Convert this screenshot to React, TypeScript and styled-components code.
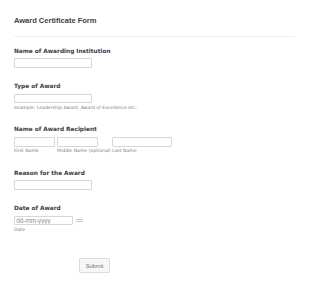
import React from 'react';
import styled, { createGlobalStyle } from 'styled-components';

const GlobalStyle = createGlobalStyle`
	html, body {
		margin: 0;
		padding: 0;
		background: #ffffff;
	}
	* {
		box-sizing: border-box;
	}
`;

const Page = styled.div`
	width: 310px;
	height: 285px;
	padding: 15.7px 0 0 14px;
	display: flex;
	flex-direction: column;
`;

const Header = styled.div`
	width: 281px;
	padding-bottom: 10px;
	border-bottom: 1px solid #f0f0f0;
	margin-bottom: 10px;
`;

const Title = styled.h1`
	margin: 0;
	font-family: 'Liberation Sans', Arial, sans-serif;
	font-size: 7.5px;
	line-height: 10px;
	font-weight: 700;
	color: #3f3f3f;
`;

const Fields = styled.div`
	display: flex;
	flex-direction: column;
	gap: 14.6px;
`;

const Field = styled.div`
	display: flex;
	flex-direction: column;
	align-items: flex-start;
`;

const Label = styled.label`
	font-family: 'DejaVu Sans', Verdana, sans-serif;
	font-size: 5.8px;
	line-height: 8px;
	font-weight: 700;
	color: #363c48;
	margin-bottom: 3.3px;
`;

const TextBox = styled.input<{ $w: number }>`
	width: ${(p) => p.$w}px;
	height: 9.8px;
	margin: 0;
	padding: 0 1.3px;
	border: 1px solid #d6d6d6;
	border-radius: 1px;
	background: #fff;
	font-family: 'Liberation Sans', Arial, sans-serif;
	font-size: 6.3px;
	color: #555;
	outline: none;
	&::placeholder {
		color: #8f8f8f;
	}
`;

const SubLabel = styled.span`
	margin-top: 1.4px;
	font-family: 'DejaVu Sans', Verdana, sans-serif;
	font-size: 4.6px;
	line-height: 6px;
	color: #7c7c7c;
	white-space: nowrap;
`;

const NameRow = styled.div`
	display: flex;
	flex-direction: row;
	gap: 2px;
`;

const NameColumn = styled.div<{ $w: number }>`
	width: ${(p) => p.$w}px;
	display: flex;
	flex-direction: column;
`;

const DateRow = styled.div`
	display: flex;
	flex-direction: row;
	align-items: center;
	gap: 3.3px;
`;

const CalendarIcon = styled.svg`
	width: 7px;
	height: 3px;
	display: block;
`;

const SubmitArea = styled.div`
	margin-top: 21px;
	padding-left: 65px;
`;

const SubmitButton = styled.button`
	width: 31px;
	height: 15px;
	padding: 0;
	border: 1px solid #dcdcdc;
	border-radius: 1px;
	background: #f7f7f7;
	font-family: 'Liberation Sans', Arial, sans-serif;
	font-size: 5.7px;
	color: #6f6f6f;
	cursor: pointer;
`;

export default function App() {
	return (
		<>
			<GlobalStyle />
			<Page>
				<Header>
					<Title>Award Certificate Form</Title>
				</Header>
				<Fields>
					<Field>
						<Label>Name of Awarding Institution</Label>
						<TextBox $w={78} type="text" />
					</Field>
					<Field>
						<Label>Type of Award</Label>
						<TextBox $w={78} type="text" />
						<SubLabel>example: Leadership Award, Award of Excellence etc.</SubLabel>
					</Field>
					<Field>
						<Label>Name of Award Recipient</Label>
						<NameRow>
							<NameColumn $w={41}>
								<TextBox $w={41} type="text" />
								<SubLabel>First Name</SubLabel>
							</NameColumn>
							<NameColumn $w={53}>
								<TextBox $w={41} type="text" />
								<SubLabel>Middle Name (optional)</SubLabel>
							</NameColumn>
							<NameColumn $w={60}>
								<TextBox $w={60} type="text" />
								<SubLabel>Last Name</SubLabel>
							</NameColumn>
						</NameRow>
					</Field>
					<Field>
						<Label>Reason for the Award</Label>
						<TextBox $w={78} type="text" />
					</Field>
					<Field>
						<Label>Date of Award</Label>
						<DateRow>
							<TextBox $w={59} type="text" placeholder="dd-mm-yyyy" />
							<CalendarIcon viewBox="0 0 7 3">
								<rect x="0.4" y="0.4" width="6.2" height="2.2" rx="1" fill="none" stroke="#b0b0b0" strokeWidth="0.8" />
							</CalendarIcon>
						</DateRow>
						<SubLabel>Date</SubLabel>
					</Field>
				</Fields>
				<SubmitArea>
					<SubmitButton type="button">Submit</SubmitButton>
				</SubmitArea>
			</Page>
		</>
	);
}
